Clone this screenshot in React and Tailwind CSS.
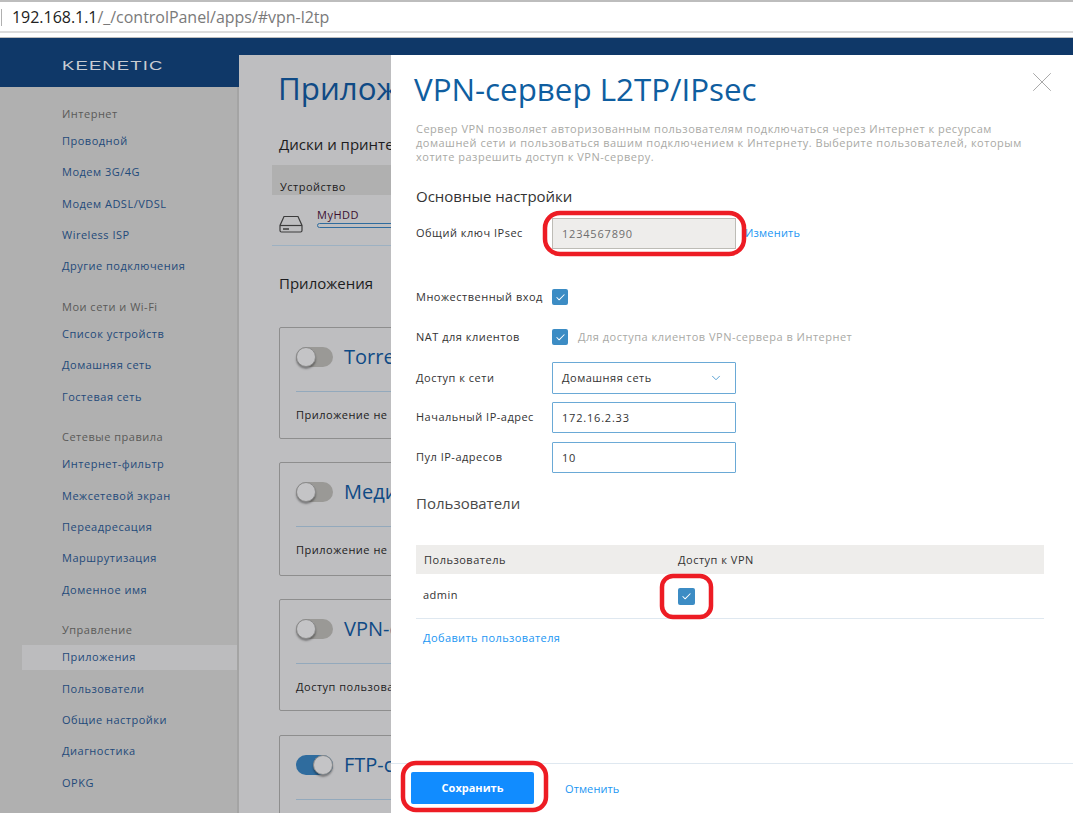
import { useState } from 'react';
import { Check, ChevronDown, X } from 'lucide-react';

const navGroups = [
  { title: 'Интернет', items: ['Проводной', 'Модем 3G/4G', 'Модем ADSL/VDSL', 'Wireless ISP', 'Другие подключения'] },
  { title: 'Мои сети и Wi-Fi', items: ['Список устройств', 'Домашняя сеть', 'Гостевая сеть'] },
  { title: 'Сетевые правила', items: ['Интернет-фильтр', 'Межсетевой экран', 'Переадресация', 'Маршрутизация', 'Доменное имя'] },
  { title: 'Управление', items: ['Приложения', 'Пользователи', 'Общие настройки', 'Диагностика', 'OPKG'] },
];

const apps = [
  { name: 'Torrent-клиент Transmission', text: 'Приложение не запущено', on: false, box: 'h-[112px] mb-[23px]' },
  { name: 'Медиа-сервер DLNA', text: 'Приложение не запущено', on: false, box: 'h-[114px] mb-[23px]' },
  { name: 'VPN-сервер L2TP/IPsec', text: 'Доступ пользователей разрешён', on: false, box: 'h-[112px] mb-[24px]' },
  { name: 'FTP-сервер', text: 'Доступ пользователей разрешён', on: true, box: 'h-[112px]' },
];

function Sidebar() {
  return (
    <aside className="w-[239px] shrink-0 flex flex-col bg-[#b0b0b0] border-r-2 border-[#a4a4a4]">
      <div className="h-[32px] bg-[#0f3868] shrink-0 pl-[62px] -mr-[2px]">
        <span className="block origin-left scale-x-[1.42] text-[13px] leading-[21px] font-normal tracking-[0.8px] text-[#c8ccd2] font-['Liberation_Sans',sans-serif]">KEENETIC</span>
      </div>
      <nav className="pt-[17px]">
        {navGroups.map(group => (
          <div key={group.title} className="mb-[17.800px]">
            <div className="pl-[62px] h-[20px] mb-[5px] leading-[20px] text-[#5a5a58]">{group.title}</div>
            {group.items.map(item => (
              <div key={item} className={`h-[25px] leading-[23px] mb-[6.300px] ml-[22px] pl-[40px] text-[#1f4a7a] ${item === 'Приложения' ? 'bg-[#bcbcbe]' : ''}`}>
                {item}
              </div>
            ))}
          </div>
        ))}
      </nav>
    </aside>
  );
}

function AppCard({ app }) {
  return (
    <div className={`w-[700px] ${app.box} border border-[#8e8e8e] rounded-[2px] px-[16px] pt-[19px] shrink-0`}>
      <div className="flex items-center gap-[11px] h-[20px]">
        <div className={`relative w-[37px] h-[20px] rounded-full ${app.on ? 'bg-[#2f6c9e]' : 'bg-[#9a9996]'}`}>
          <div className={`absolute top-0 w-[20px] h-[20px] rounded-full bg-[#c4c4c6] border border-[#8a8a8a] shadow-[0_2px_2px_rgba(0,0,0,0.35)] ${app.on ? 'right-0' : 'left-0'}`} />
        </div>
        <span className="text-[20px] leading-[20px] tracking-normal text-[#0f4a85]">{app.name}</span>
      </div>
      <div className="h-px bg-[#93a9bc] mt-[24px]" />
      <div className="mt-[15px] leading-[16px] text-[#1c1c20]">{app.text}</div>
    </div>
  );
}

function PageBehind() {
  return (
    <main className="w-[152px] shrink-0 overflow-hidden bg-[#bebec0] whitespace-nowrap">
      <div className="w-[900px] pl-[40px] pt-[14px]">
        <div className="-ml-[1px] text-[31.300px] leading-[38px] tracking-normal text-[#0f4a85]">Приложения</div>
        <div className="mt-[27px] text-[15px] leading-[20px] tracking-normal text-[#1c1c20]">Диски и принтеры</div>
        <div className="-ml-[7px] mt-[11px] h-[30px] bg-[#b0b0b0] pl-[8px] pt-[14px] leading-[16px] text-[#1c1c20]">Устройство</div>
        <div className="-ml-[7px] h-[51px] pl-[7px] flex border-b border-[#9db1c2]">
          <svg className="mt-[20px]" width="24" height="18" viewBox="0 0 24 18" fill="none" stroke="#3c3c3c" strokeWidth="1.2">
            <path d="M5 1.500h14l4 9v5a1.500 1.500 0 0 1-1.500 1.500h-19A1.500 1.500 0 0 1 1 15.500v-5z" />
            <path d="M1 10.500h22" />
            <path d="M4 14h6" strokeWidth="1.500" />
          </svg>
          <div className="ml-[14px] pt-[13px]">
            <div className="leading-[14px] text-[#3a1030]">MyHDD</div>
            <div className="mt-[1px] w-[300px] h-[5px] rounded-full border border-[#2f6c9e]" />
          </div>
        </div>
        <div className="mt-[27px] text-[15px] leading-[20px] tracking-normal text-[#1c1c20]">Приложения</div>
        <div className="mt-[34px] flex flex-col">
          {apps.map(app => <AppCard key={app.name} app={app} />)}
        </div>
      </div>
    </main>
  );
}

function Checkbox({ size = 'w-[16px] h-[16px]' }) {
  return (
    <span className={`${size} shrink-0 rounded-[2px] bg-[#3c8cc4] flex items-center justify-center`}>
      <Check size={11} strokeWidth={2.2} color="#ffffff" />
    </span>
  );
}

function FormRow({ label, className = '', children }) {
  return (
    <div className={`flex items-center ${className}`}>
      <label className="w-[136px] shrink-0 text-[#333333]">{label}</label>
      {children}
    </div>
  );
}

function VpnDialog() {
  const [ipsecKey] = useState('1234567890');
  return (
    <section className="relative flex-1 min-w-0 flex flex-col bg-white whitespace-nowrap">
      <button className="absolute right-[14px] top-[10px] text-[#a8a8a8]">
        <X size={34} strokeWidth={0.7} />
      </button>
      <div className="flex-1 pl-[25px] pr-[29px]">
        <h1 className="-ml-[2px] pt-[15px] text-[31.300px] leading-[38px] tracking-normal text-[#0f5ea0]">VPN-сервер L2TP/IPsec</h1>
        <p className="mt-[14px] text-[#a9a9a5] leading-[14px]">
          Сервер VPN позволяет авторизованным пользователям подключаться через Интернет к ресурсам<br />
          домашней сети и пользоваться вашим подключением к Интернету. Выберите пользователей, которым<br />
          хотите разрешить доступ к VPN-серверу.
        </p>
        <h2 className="mt-[22px] text-[15px] leading-[20px] tracking-normal text-[#333333]">Основные настройки</h2>
        <FormRow label="Общий ключ IPsec" className="mt-[12px] h-[31px]">
          <div className="w-[184px] h-[31px] border border-[#bdbcb6] bg-[#eeedeb] pl-[9px] leading-[29px] tracking-[0.800px] text-[#6e6e6e]">{ipsecKey}</div>
          <a className="ml-[9px] tracking-[0.200px] text-[#2196f3]">Изменить</a>
        </FormRow>
        <FormRow label="Множественный вход" className="mt-[40px] h-[16px]">
          <Checkbox />
        </FormRow>
        <FormRow label="NAT для клиентов" className="mt-[24px] h-[16px]">
          <Checkbox />
          <span className="ml-[10px] text-[#a9a9a5]">Для доступа клиентов VPN-сервера в Интернет</span>
        </FormRow>
        <FormRow label="Доступ к сети" className="mt-[17px] h-[32px]">
          <div className="w-[184px] h-[32px] border border-[#6aa9d6] rounded-[1px] pl-[9px] pr-[12px] flex items-center justify-between text-[#333333]">
            Домашняя сеть
            <ChevronDown size={14} strokeWidth={1.600} color="#4d9bd0" />
          </div>
        </FormRow>
        <FormRow label="Начальный IP-адрес" className="mt-[8px] h-[31px]">
          <div className="w-[184px] h-[31px] border border-[#6aa9d6] rounded-[1px] pl-[9px] leading-[29px] tracking-[0.800px] text-[#333333]">172.16.2.33</div>
        </FormRow>
        <FormRow label="Пул IP-адресов" className="mt-[9px] h-[31px]">
          <div className="w-[184px] h-[31px] border border-[#6aa9d6] rounded-[1px] pl-[9px] leading-[29px] tracking-[0.800px] text-[#333333]">10</div>
        </FormRow>
        <h2 className="mt-[20px] text-[15px] leading-[20px] tracking-normal text-[#4a4a4a]">Пользователи</h2>
        <div className="mt-[32px] h-[29px] pt-[1px] bg-[#eeedeb] flex items-center text-[#333333]">
          <span className="w-[262px] pl-[8px]">Пользователь</span>
          <span>Доступ к VPN</span>
        </div>
        <div className="h-[45px] border-b border-[#dfe8f0] flex items-center text-[#333333]">
          <span className="w-[262px] pl-[7px] -mt-[1px]">admin</span>
          <Checkbox size="w-[17px] h-[17px]" />
        </div>
        <a className="block mt-[11px] pl-[7px] leading-[16px] tracking-[0.400px] text-[#2196f3]">Добавить пользователя</a>
      </div>
      <footer className="h-[50px] shrink-0 border-t border-[#dfe8f0] pl-[20px] pt-[8px] flex items-start">
        <button className="w-[123px] h-[32px] pt-[1px] rounded-[2px] bg-[#118cff] text-white font-bold tracking-normal">Сохранить</button>
        <a className="ml-[31px] leading-[34px] tracking-[0.100px] text-[#2196f3]">Отменить</a>
      </footer>
    </section>
  );
}

export default function App() {
  return (
    <div className="relative w-[1073px] h-[813px] overflow-hidden flex flex-col bg-white text-[11px] tracking-[0.500px] font-['Open_Sans',sans-serif]">
      <div className="h-[33px] shrink-0 border-t-2 border-b-2 border-t-[#bdbdbd] border-b-[#dcdcdc] flex items-center pl-[12px] relative tracking-[-0.030px]">
        <span className="absolute left-[1px] top-[7px] h-[17px] w-px bg-[#b0b0b0]" />
        <span className="text-[16px] text-[#222222]">192.168.1.1</span>
        <span className="text-[16px] text-[#7a7a7a]">/_/controlPanel/apps/#vpn-l2tp</span>
      </div>
      <div className="h-[5px] shrink-0 bg-white border-b border-[#bdbdbd]" />
      <div className="h-[17px] shrink-0 bg-[#0f3868]" />
      <div className="flex-1 min-h-0 flex">
        <Sidebar />
        <PageBehind />
        <VpnDialog />
      </div>
      {/* красные пометки поверх скриншота */}
      <svg className="absolute inset-0 pointer-events-none" width="1073" height="813" fill="none" stroke="#ed1c24" strokeWidth="4.500">
        <rect x="545" y="213" width="199" height="41" rx="15" />
        <rect x="662" y="576" width="49" height="41" rx="11" />
        <rect x="403" y="763" width="143" height="47" rx="13" />
      </svg>
    </div>
  );
}
